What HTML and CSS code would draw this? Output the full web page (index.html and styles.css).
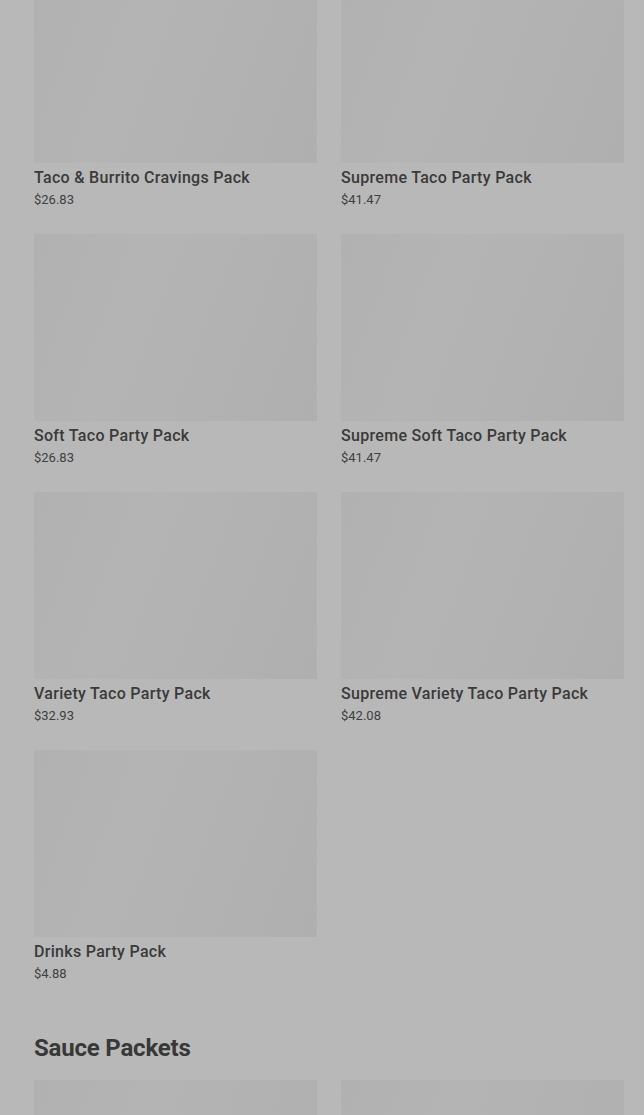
FILE: index.html
```html
<!DOCTYPE html>
<html>
<head>
<meta charset="utf-8">
<link rel="stylesheet" href="styles.css">
</head>
<body>
<main class="page">
  <section class="grid first">
    <article class="card"><div class="thumb"></div><h3 class="name">Taco &amp; Burrito Cravings Pack</h3><p class="price">$26.83</p></article>
    <article class="card"><div class="thumb"></div><h3 class="name">Supreme Taco Party Pack</h3><p class="price">$41.47</p></article>
    <article class="card"><div class="thumb"></div><h3 class="name">Soft Taco Party Pack</h3><p class="price">$26.83</p></article>
    <article class="card"><div class="thumb"></div><h3 class="name">Supreme Soft Taco Party Pack</h3><p class="price">$41.47</p></article>
    <article class="card"><div class="thumb"></div><h3 class="name">Variety Taco Party Pack</h3><p class="price">$32.93</p></article>
    <article class="card"><div class="thumb"></div><h3 class="name">Supreme Variety Taco Party Pack</h3><p class="price">$42.08</p></article>
    <article class="card"><div class="thumb"></div><h3 class="name">Drinks Party Pack</h3><p class="price">$4.88</p></article>
  </section>
  <h2 class="section-title">Sauce Packets</h2>
  <section class="grid">
    <article class="card"><div class="thumb"></div></article>
    <article class="card"><div class="thumb"></div></article>
  </section>
</main>
</body>
</html>
```
FILE: styles.css
```css
html, body {
  margin: 0;
  padding: 0;
  background: #b8b8b8;
  overflow: hidden;
}
.page {
  padding: 0 20px 0 34px;
  font-family: Roboto, "Liberation Sans", sans-serif;
  color: #3a3a3a;
}
.grid {
  display: grid;
  grid-template-columns: 283px 283px;
  column-gap: 24px;
  row-gap: 24px;
}
.grid.first {
  margin-top: -24px;
}
.card {
  display: flex;
  flex-direction: column;
}
.thumb {
  height: 187px;
  background: linear-gradient(110deg, #b1b1b1 0%, #b4b4b4 35%, #b2b2b2 65%, #afafaf 100%);
}
.name {
  margin: 4px 0 0 0;
  font-size: 16px;
  line-height: 22px;
  font-weight: 500;
  letter-spacing: 0.3px;
}
.price {
  margin: 1px 0 0 0;
  font-size: 13px;
  line-height: 20px;
  color: #404040;
}
.section-title {
  margin: 48px 0 16px 0;
  font-size: 24px;
  line-height: 32px;
  font-weight: 700;
  letter-spacing: -0.2px;
  color: #383838;
}
```
